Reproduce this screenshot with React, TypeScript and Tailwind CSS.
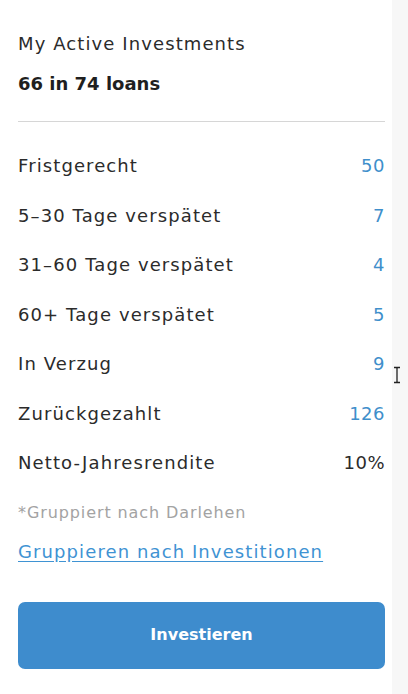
import React from 'react';

type Row = { label: string; value: string; accent?: boolean };

const rows: Row[] = [
  { label: 'Fristgerecht', value: '50', accent: true },
  { label: '5–30 Tage verspätet', value: '7', accent: true },
  { label: '31–60 Tage verspätet', value: '4', accent: true },
  { label: '60+ Tage verspätet', value: '5', accent: true },
  { label: 'In Verzug', value: '9', accent: true },
  { label: 'Zurückgezahlt', value: '126', accent: true },
  { label: 'Netto-Jahresrendite', value: '10%' },
];

const App: React.FC = () => {
  return (
    <div className="min-h-[694px] w-[408px] bg-[#f7f7f7] font-['DejaVu_Sans',sans-serif]">
      <div className="relative min-h-[694px] w-[392px] bg-white pl-[18px] pr-[7px] pt-[32px]">
        <h2 className="text-[18px] leading-[24px] tracking-[1.1px] text-[#2b2b2b]">My Active Investments</h2>
        <p className="mt-[16px] text-[18px] font-bold leading-[24px] text-[#1f1f1f]">66 in 74 loans</p>

        <hr className="mt-[25px] border-t border-[#d6d6d6]" />

        <div className="mt-[19px]">
          {rows.map((row) => (
            <div key={row.label} className="flex h-[49.5px] items-center justify-between">
              <span className="text-[18px] tracking-[1.1px] text-[#2b2b2b]">{row.label}</span>
              <span className={`text-[18px] tracking-[0.5px] ${row.accent ? 'text-[#3f8fcb]' : 'text-[#2b2b2b]'}`}>
                {row.value}
              </span>
            </div>
          ))}
        </div>

        <p className="mt-[15px] text-[16px] leading-[20px] tracking-[0.9px] text-[#a3a3a3]">*Gruppiert nach Darlehen</p>
        <a
          href="#"
          className="mt-[17px] block text-[18px] leading-[24px] tracking-[1.1px] text-[#3f93d3] underline underline-offset-[3px]"
        >
          Gruppieren nach Investitionen
        </a>

        <button className="mt-[38px] flex h-[67px] w-full items-center justify-center rounded-[7px] bg-[#3e8ccd] text-[16px] font-bold text-white">
          Investieren
        </button>

        {/* text cursor hovering near the list */}
        <svg className="absolute left-[392px] top-[366px]" width="10" height="18" viewBox="0 0 10 18" fill="none">
          <path d="M2 1.5h2.5L5 2.5l.5-1H8M5 2.5v13M2 16.5h2.5l.5-1 .5 1H8" stroke="#222" strokeWidth="1.3" />
        </svg>
      </div>
    </div>
  );
};

export default App;
